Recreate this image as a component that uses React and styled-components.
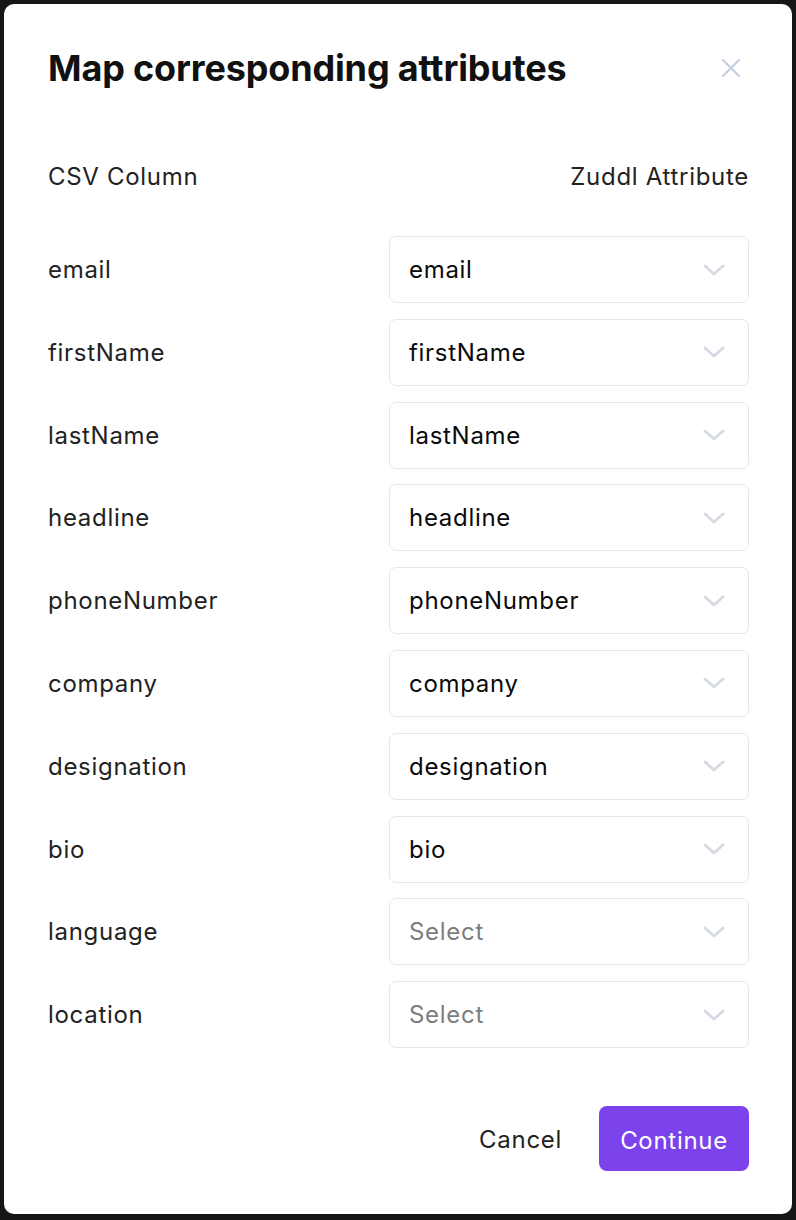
import React from "react";
import styled, { createGlobalStyle } from "styled-components";

const Global = createGlobalStyle`
  html, body { margin: 0; padding: 0; background: #161616; }
  body { font-family: Inter, "Noto Sans", sans-serif; }
  * { box-sizing: border-box; }
`;

const Page = styled.div`
  padding: 4px 4px 6px 4px;
  min-height: 1220px;
`;

const Modal = styled.div`
  background: #fff;
  border-radius: 10px;
  height: 1210px;
  padding: 37px 43px 0 44px;
  display: flex;
  flex-direction: column;
`;

const TitleRow = styled.div`
  display: flex;
  align-items: center;
  justify-content: space-between;
`;

const Title = styled.h1`
  margin: 0;
  font-size: 36px;
  line-height: 54px;
  font-weight: 700;
  color: #111;
  letter-spacing: -0.15px;
`;

const CloseBtn = styled.button`
  border: 0;
  background: none;
  padding: 0;
  width: 24px;
  height: 24px;
  display: flex;
  align-items: center;
  justify-content: center;
  margin-right: 6px;
  cursor: pointer;
`;

const HeaderRow = styled.div`
  display: flex;
  justify-content: space-between;
  margin-top: 66px;
  font-size: 24px;
  line-height: 32px;
  letter-spacing: 0.7px;
  color: #222;
`;

const Rows = styled.div`
  display: flex;
  flex-direction: column;
  gap: 15.8px;
  margin-top: 43px;
`;

const Row = styled.div`
  display: flex;
  align-items: center;
  justify-content: space-between;
`;

const Label = styled.span`
  font-size: 24px;
  letter-spacing: 0.7px;
  color: #222;
`;

const SelectBox = styled.div`
  width: 360px;
  height: 67px;
  border: 1px solid #e3e7ef;
  border-radius: 7px;
  display: flex;
  align-items: center;
  justify-content: space-between;
  padding: 0 23px 0 19px;
  font-size: 24px;
  letter-spacing: 0.7px;
  color: ${(p) => (p.$placeholder ? "#7d7d7d" : "#0a0a0a")};
`;

const Footer = styled.div`
  display: flex;
  justify-content: flex-end;
  align-items: center;
  gap: 37px;
  margin-top: 58px;
`;

const CancelBtn = styled.button`
  border: 0;
  background: none;
  font-family: inherit;
  font-size: 24px;
  line-height: 32px;
  letter-spacing: 0.7px;
  color: #222;
  padding: 2px 0 0;
  cursor: pointer;
`;

const ContinueBtn = styled.button`
  border: 0;
  background: #7c43ec;
  color: #fff;
  font-family: inherit;
  font-size: 24px;
  letter-spacing: 0.7px;
  width: 150px;
  height: 65px;
  padding: 3px 0 0;
  border-radius: 8px;
  cursor: pointer;
`;

const Chevron = () => (
  <svg width="22" height="12" viewBox="0 0 22 12" fill="none">
    <path d="M2 2l9 8 9-8" stroke="#d5dae5" strokeWidth="3" strokeLinecap="round" strokeLinejoin="round" />
  </svg>
);

const CloseIcon = () => (
  <svg width="20" height="20" viewBox="0 0 20 20" fill="none">
    <path d="M2 2l16 16M18 2L2 18" stroke="#c5cddf" strokeWidth="2.2" strokeLinecap="round" />
  </svg>
);

const rows = [
  ["email", "email"],
  ["firstName", "firstName"],
  ["lastName", "lastName"],
  ["headline", "headline"],
  ["phoneNumber", "phoneNumber"],
  ["company", "company"],
  ["designation", "designation"],
  ["bio", "bio"],
  ["language", null],
  ["location", null],
];

export default function App() {
  return (
    <>
      <Global />
      <Page>
        <Modal>
          <TitleRow>
            <Title>Map corresponding attributes</Title>
            <CloseBtn aria-label="Close">
              <CloseIcon />
            </CloseBtn>
          </TitleRow>
          <HeaderRow>
            <span>CSV Column</span>
            <span>Zuddl Attribute</span>
          </HeaderRow>
          <Rows>
            {rows.map(([label, value]) => (
              <Row key={label}>
                <Label>{label}</Label>
                <SelectBox $placeholder={!value}>
                  <span>{value || "Select"}</span>
                  <Chevron />
                </SelectBox>
              </Row>
            ))}
          </Rows>
          <Footer>
            <CancelBtn>Cancel</CancelBtn>
            <ContinueBtn>Continue</ContinueBtn>
          </Footer>
        </Modal>
      </Page>
    </>
  );
}
